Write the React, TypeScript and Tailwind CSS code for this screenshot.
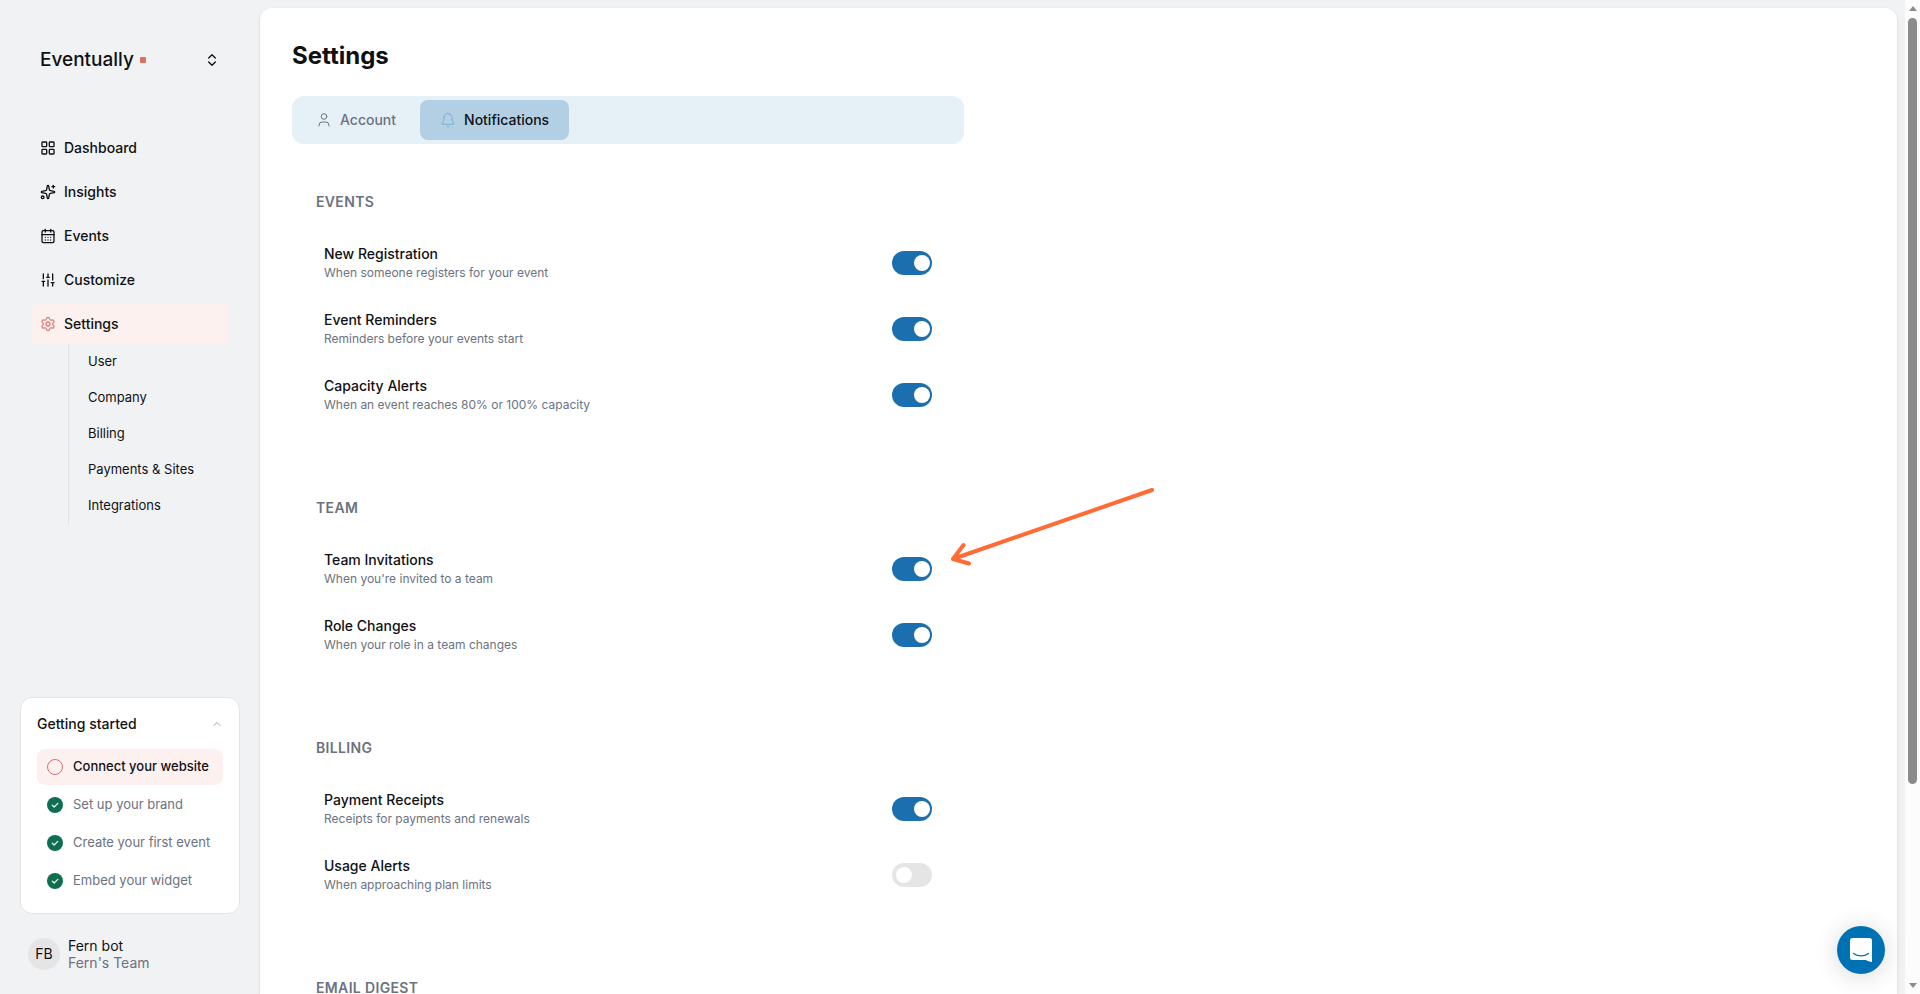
import type { ReactNode } from 'react'
import {
  CalendarDays,
  ChevronsUpDown,
  ChevronUp,
  LayoutGrid,
  Settings,
  SlidersVertical,
  Sparkles,
  type LucideIcon,
} from 'lucide-react'

type Notification = { id: string; title: string; description: string; enabled: boolean }
type Section = { title: string; items: Notification[] }

const NAV: { label: string; icon: LucideIcon }[] = [
  { label: 'Dashboard', icon: LayoutGrid },
  { label: 'Insights', icon: Sparkles },
  { label: 'Events', icon: CalendarDays },
  { label: 'Customize', icon: SlidersVertical },
]

const SETTINGS_LINKS = ['User', 'Company', 'Billing', 'Payments & Sites', 'Integrations']

const STEPS = [
  { label: 'Connect your website', done: false },
  { label: 'Set up your brand', done: true },
  { label: 'Create your first event', done: true },
  { label: 'Embed your widget', done: true },
]

const SECTIONS: Section[] = [
  {
    title: 'EVENTS',
    items: [
      { id: 'new-registration', title: 'New Registration', description: 'When someone registers for your event', enabled: true },
      { id: 'event-reminders', title: 'Event Reminders', description: 'Reminders before your events start', enabled: true },
      { id: 'capacity-alerts', title: 'Capacity Alerts', description: 'When an event reaches 80% or 100% capacity', enabled: true },
    ],
  },
  {
    title: 'TEAM',
    items: [
      { id: 'team-invitations', title: 'Team Invitations', description: "When you're invited to a team", enabled: true },
      { id: 'role-changes', title: 'Role Changes', description: 'When your role in a team changes', enabled: true },
    ],
  },
  {
    title: 'BILLING',
    items: [
      { id: 'payment-receipts', title: 'Payment Receipts', description: 'Receipts for payments and renewals', enabled: true },
      { id: 'usage-alerts', title: 'Usage Alerts', description: 'When approaching plan limits', enabled: false },
    ],
  },
  { title: 'EMAIL DIGEST', items: [] },
]

function Sidebar() {
  return (
    <aside className="flex w-[260px] shrink-0 flex-col">
      <div className="flex h-[120px] items-center justify-between px-10">
        <div className="flex items-center gap-1.5 text-[19px] font-medium">
          Eventually
          <span className="size-1.5 rounded-[1px] bg-[#e07060]" />
        </div>
        <button type="button" aria-label="Switch team">
          <ChevronsUpDown className="size-4" />
        </button>
      </div>

      <nav className="mt-2 px-8">
        <ul className="flex flex-col gap-1">
          {NAV.map(({ label, icon: Icon }) => (
            <li key={label}>
              <a href="#" className="flex h-10 items-center gap-2 px-2 text-sm font-medium">
                <Icon className="size-4" />
                {label}
              </a>
            </li>
          ))}
          <li>
            <a href="#" className="flex h-10 items-center gap-2 rounded-md bg-[#fdf1ef] px-2 text-sm font-medium">
              <Settings className="size-4 text-[#de8080]" />
              Settings
            </a>
            <ul className="ml-9 border-l border-[#e0e1e3] pl-[19px]">
              {SETTINGS_LINKS.map((label) => (
                <li key={label}>
                  <a href="#" className="flex h-9 items-center text-[13px]">{label}</a>
                </li>
              ))}
            </ul>
          </li>
        </ul>
      </nav>

      <div className="mt-auto px-5 pb-[23px]">
        <section className="rounded-xl border border-[#e3e4e6] bg-white px-4 pt-4 pb-3.5">
          <div className="flex h-5 items-center justify-between">
            <h2 className="text-sm font-medium">Getting started</h2>
            <button type="button" aria-label="Collapse" className="text-gray-400">
              <ChevronUp className="size-3" />
            </button>
          </div>
          <ul className="mt-[15px] flex flex-col gap-0.5">
            {STEPS.map((step) => (
              <li key={step.label}>
                {step.done ? (
                  <a href="#" className="flex h-9 items-center gap-2.5 px-2.5 text-[13px] text-[#6b7280]">
                    <CheckCircle />
                    {step.label}
                  </a>
                ) : (
                  <a href="#" className="flex h-9 items-center gap-2.5 rounded-lg bg-[#fdf1ef] px-2.5 text-[13px] font-medium">
                    <span className="size-4 shrink-0 rounded-full border border-[#e06c6c]" />
                    {step.label}
                  </a>
                )}
              </li>
            ))}
          </ul>
        </section>
        <div className="mt-[23px] flex items-center gap-2 pl-2">
          <div className="flex size-8 items-center justify-center rounded-full bg-[#e5e5e5] text-sm">FB</div>
          <div className="text-sm leading-[17px]">
            <p>Fern bot</p>
            <p className="text-[#6b7280]">Fern's Team</p>
          </div>
        </div>
      </div>
    </aside>
  )
}

function CheckCircle() {
  return (
    <svg viewBox="0 0 16 16" className="size-4 shrink-0" fill="none">
      <circle cx="8" cy="8" r="8" fill="#0f6e50" />
      <path d="M5.3 8.2 7.2 10l3.6-3.6" stroke="#e2f3ec" strokeWidth="1.3" strokeLinecap="round" strokeLinejoin="round" />
    </svg>
  )
}

function UserIcon() {
  return (
    <svg viewBox="0 0 16 16" className="size-4" fill="none" stroke="currentColor" strokeLinecap="round">
      <circle cx="8" cy="4.5" r="2.8" />
      <path d="M3 14v-.7A3.300 3.300 0 0 1 6.300 10h3.400a3.300 3.300 0 0 1 3.300 3.300v.7" />
    </svg>
  )
}

function BellIcon() {
  return (
    <svg viewBox="0 0 16 16" className="size-4" fill="none" stroke="#7aafd0" strokeLinecap="round" strokeLinejoin="round">
      <path d="M4 5.500a4 4 0 0 1 8 0c0 3.500.8 4.700 1.800 5.900.3.400.1.900-.4.900H2.600c-.5 0-.7-.5-.4-.9C3.200 10.200 4 9 4 5.500z" />
      <path d="M7 14.500c.6.400 1.400.4 2 0" />
    </svg>
  )
}

function Tab({ active, icon, children }: { active?: boolean; icon: ReactNode; children: ReactNode }) {
  return (
    <button
      type="button"
      role="tab"
      aria-selected={active ?? false}
      className={`flex h-10 items-center gap-2 rounded-lg px-5 text-sm font-medium ${active ? 'bg-[#b2cfe4]' : 'text-[#6b7280]'}`}
    >
      {icon}
      {children}
    </button>
  )
}

function NotificationRow({ item, pointed }: { item: Notification; pointed?: boolean }) {
  return (
    <div className="relative flex items-center justify-between px-2 py-1.5">
      <label htmlFor={item.id}>
        <span className="block text-sm leading-5 font-medium">{item.title}</span>
        <span className="block text-xs leading-[18px] text-[#6b7280]">{item.description}</span>
      </label>
      <input
        id={item.id}
        type="checkbox"
        role="switch"
        defaultChecked={item.enabled}
        className="h-6 w-10 appearance-none rounded-full bg-[#e5e5e5] p-1 before:block before:size-4 before:rounded-full before:bg-white checked:bg-[#1b6fae] checked:before:translate-x-[18px]"
      />
      {pointed && <Arrow />}
    </div>
  )
}

function Arrow() {
  return (
    <svg
      viewBox="0 0 208 82"
      className="pointer-events-none absolute bottom-[26px] left-full ml-[9px] h-[82px] w-[208px]"
      fill="none"
      stroke="#ff6b35"
      strokeWidth="4"
      strokeLinecap="round"
      strokeLinejoin="round"
    >
      <path d="M203 4 4 73M14.500 59 4 73l16 4.500" />
    </svg>
  )
}

function Scrollbar() {
  return (
    <div className="flex w-[15px] shrink-0 flex-col items-center bg-[#fcfcfc] py-1.5">
      <svg viewBox="0 0 8 5" className="h-[5px] w-2" fill="#8b8b8b">
        <path d="M4 0 8 5H0z" />
      </svg>
      <div className="my-[7px] w-full flex-1">
        <div className="mx-auto h-4/5 w-[9px] rounded-full bg-[#8b8b8b]" />
      </div>
      <svg viewBox="0 0 8 5" className="h-[5px] w-2" fill="#8b8b8b">
        <path d="M4 5 0 0h8z" />
      </svg>
    </div>
  )
}

export default function App() {
  return (
    <div className="flex h-screen overflow-hidden bg-[#f1f2f4] font-['Inter',sans-serif] text-[#0f1115]">
      <Sidebar />
      <main className="mt-2 mr-2 min-w-0 flex-1 overflow-hidden rounded-t-xl bg-white px-8 pt-7 shadow-[0_1px_3px_rgba(0,0,0,0.14)]">
        <h1 className="text-2xl leading-10 font-bold">Settings</h1>
        <div role="tablist" className="mt-5 flex max-w-2xl gap-1 rounded-xl bg-[#e5f0f7] p-1">
          <Tab icon={<UserIcon />}>Account</Tab>
          <Tab active icon={<BellIcon />}>Notifications</Tab>
        </div>
        <div className="mt-[46px] flex max-w-2xl flex-col gap-[76px] px-6">
          {SECTIONS.map((section) => (
            <section key={section.title} className="flex flex-col gap-6">
              <h2 className="text-sm leading-6 font-semibold tracking-wide text-[#6b7280]">{section.title}</h2>
              <div className="flex flex-col gap-4">
                {section.items.map((item) => (
                  <NotificationRow key={item.id} item={item} pointed={item.id === 'team-invitations'} />
                ))}
              </div>
            </section>
          ))}
        </div>
      </main>
      <Scrollbar />
      <button
        type="button"
        aria-label="Open chat"
        className="fixed right-[35px] bottom-5 flex size-12 items-center justify-center rounded-full bg-[#0071b2] shadow-[0_2px_24px_rgba(0,0,0,0.16)]"
      >
        <svg viewBox="0 0 22 24" className="h-6 w-[22px]" fill="none">
          <path d="M2.500 0h17A2.500 2.500 0 0 1 22 2.500V24c-2 0-4.500-1.200-6-2H2.500A2.500 2.500 0 0 1 0 19.500v-17A2.500 2.500 0 0 1 2.500 0z" fill="#fff" />
          <path d="M3.500 15.500c4.500 3.200 10.500 3.200 15 0" stroke="#0071b2" strokeWidth="1.400" strokeLinecap="round" />
        </svg>
      </button>
    </div>
  )
}
